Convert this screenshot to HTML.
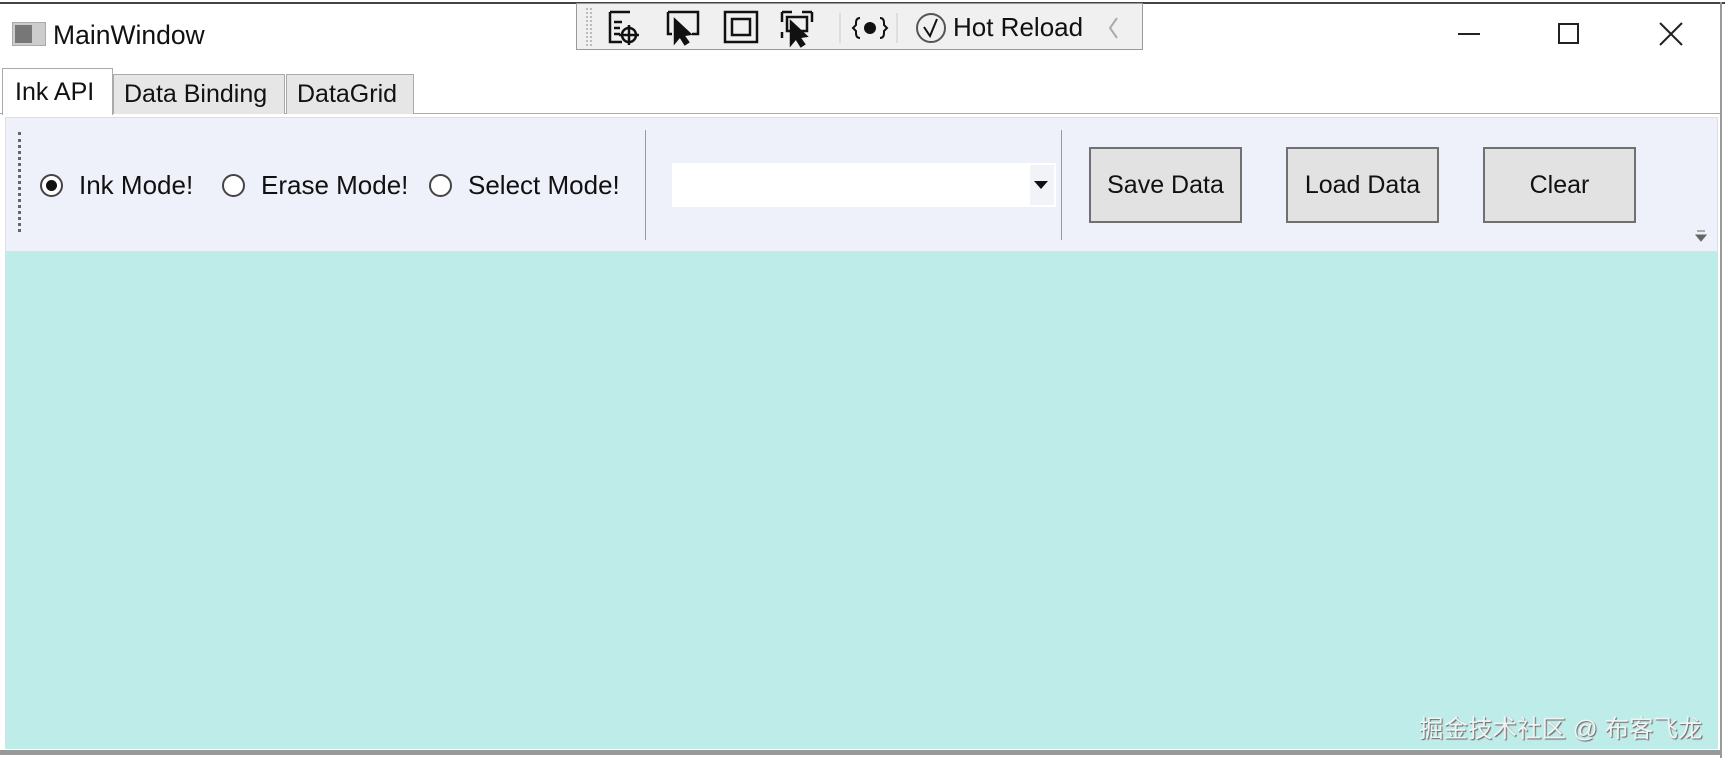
<!DOCTYPE html>
<html><head><meta charset="utf-8"><style>
*{margin:0;padding:0;box-sizing:border-box}
body{width:1725px;height:760px;background:#fff;position:relative;overflow:hidden;font-family:"Liberation Sans","DejaVu Sans",sans-serif;color:#111}
.a{position:absolute}
.t{font-size:25px;white-space:nowrap}
.tab{position:absolute;top:74px;height:40px;border:1px solid #aaa;border-bottom:none;background:#e6e6e6;font-size:25px;padding:5px 0 0 10px;white-space:nowrap}
.btn{position:absolute;top:147px;width:153px;height:76px;border:2px solid #707070;background:#e2e2e2;font-size:25px;text-align:center;line-height:72px}
.radio{position:absolute;top:174px;width:23px;height:23px;border:2px solid #444;border-radius:50%;background:#fff}
</style></head><body>
<div class="a" style="left:0;top:2px;width:1725px;height:2px;background:#444"></div>
<div class="a" style="left:1720px;top:2px;width:2px;height:756px;background:#999"></div>
<div class="a" style="left:12px;top:22px;width:34px;height:24px;background:#ccc;border:1px solid #aaa"></div>
<div class="a" style="left:15px;top:25px;width:17px;height:18px;background:#777"></div>
<div class="a t" style="left:53px;top:20px;font-size:26.5px">MainWindow</div>
<div class="a" style="left:576px;top:3px;width:567px;height:47px;background:#f0f0f0;border:1px solid #999"></div>
<div class="a" style="left:586px;top:8px;width:6px;height:38px;border-left:2px dotted #bbb;border-right:2px dotted #bbb"></div>
<svg class="a" style="left:605px;top:8px" width="520" height="40" viewBox="0 0 520 40" fill="none" stroke="#111" stroke-width="2.5">
<path d="M5 4h20M5 4v30h12M9 14h8M9 20h6M9 26h6" /><circle cx="24" cy="27" r="7"/><path d="M24 17v20M14 27h20"/>
<path d="M63 4h30v22h-6M63 4v22h4"/><path d="M70 12l0 22 5-6 5 8 3-2-5-7 7-1z" fill="#111"/>
<rect x="120" y="4" width="32" height="30"/><rect x="127" y="11" width="18" height="16"/>
<path d="M177 4h10M177 4v10M207 4h-10M207 4v10M177 30v-6"/><rect x="182" y="9" width="20" height="14"/><path d="M186 14l0 22 5-6 5 8 3-2-5-7 7-1z" fill="#111"/>
<path d="M235 5v30" stroke="#ccc" stroke-width="1"/>
<path d="M255 10q-4 0-4 5v2l-3 3 3 3v2q0 5 4 5M275 10q4 0 4 5v2l3 3-3 3v2q0 5-4 5" stroke-width="2"/><circle cx="265" cy="20" r="6" fill="#111" stroke="none"/>
<path d="M292 5v30" stroke="#ccc" stroke-width="1"/>
<circle cx="326" cy="20" r="14" stroke="#555" stroke-width="2"/><path d="M319 19l6 9 7-17" stroke-width="2"/>
<path d="M512 10l-7 10 7 10" stroke="#aaa" stroke-width="2"/>
</svg>
<div class="a t" style="left:953px;top:12px;font-size:26px">Hot Reload</div>
<div class="a" style="left:1458px;top:33px;width:22px;height:2px;background:#222"></div>
<div class="a" style="left:1558px;top:23px;width:21px;height:21px;border:2px solid #222"></div>
<svg class="a" style="left:1659px;top:22px" width="24" height="24"><path d="M1 1l22 22M23 1L1 23" stroke="#222" stroke-width="2"/></svg>
<div class="a" style="left:0;top:113px;width:1720px;height:1px;background:#aaa"></div>
<div class="tab" style="left:113px;width:172px">Data Binding</div>
<div class="tab" style="left:286px;width:128px">DataGrid</div>
<div class="tab" style="left:2px;top:68px;width:111px;height:47px;background:#fff;padding-top:9px;padding-left:12px">Ink API</div>
<div class="a" style="left:5px;top:117px;width:1713px;height:135px;background:#eef1f9;border:1px solid #dde"></div>
<div class="a" style="left:18px;top:132px;width:3px;height:100px;border-left:3px dotted #666"></div>
<div class="radio" style="left:40px"></div><div class="a" style="left:46px;top:180px;width:11px;height:11px;border-radius:50%;background:#111"></div>
<div class="a t" style="left:79px;top:170px;font-size:26px">Ink Mode!</div>
<div class="radio" style="left:222px"></div>
<div class="a t" style="left:261px;top:170px;font-size:26px">Erase Mode!</div>
<div class="radio" style="left:429px"></div>
<div class="a t" style="left:468px;top:170px;font-size:26px">Select Mode!</div>
<div class="a" style="left:645px;top:130px;width:1px;height:110px;background:#999"></div>
<div class="a" style="left:672px;top:163px;width:384px;height:44px;background:#fff"></div>
<div class="a" style="left:1030px;top:165px;width:24px;height:40px;background:#f2f3f8"></div>
<svg class="a" style="left:1034px;top:181px" width="14" height="8"><path d="M0 0h14L7 8z" fill="#111"/></svg>
<div class="a" style="left:1061px;top:130px;width:1px;height:110px;background:#999"></div>
<div class="btn" style="left:1089px">Save Data</div>
<div class="btn" style="left:1286px">Load Data</div>
<div class="btn" style="left:1483px">Clear</div>
<svg class="a" style="left:1695px;top:230px" width="12" height="12"><path d="M2 1h8M1 5h10L6 11z" fill="#666" stroke="#666" stroke-width="1"/></svg>
<div class="a" style="left:5px;top:252px;width:1713px;height:497px;background:#bdece9"></div>
<div class="a" style="left:1419px;top:710px;font-size:24.5px;color:#f2f2f2;text-shadow:1px 1px 1px #666;font-family:'Liberation Sans','Noto Sans CJK SC',sans-serif;white-space:nowrap">掘金技术社区 @ 布客飞龙</div>
<div class="a" style="left:0;top:750px;width:1722px;height:5px;background:#999"></div>
</body></html>
